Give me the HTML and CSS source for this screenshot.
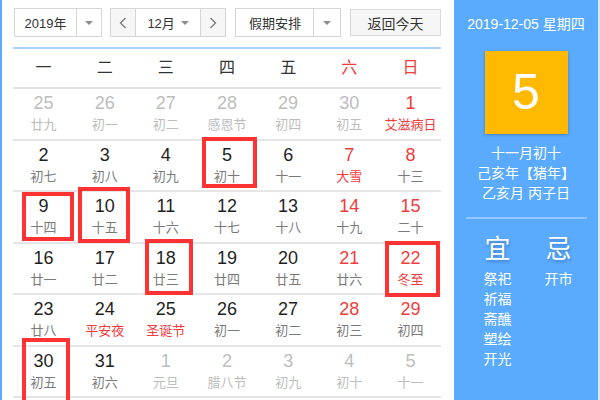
FILE: index.html
```html
<!DOCTYPE html>
<html>
<head>
<meta charset="utf-8">
<title>万年历</title>
<link rel="stylesheet" href="styles.css">
</head>
<body>
<div class="widget">
  <div class="main">
    <div class="toolbar">
      <div class="select year"><span class="sel-text">2019年</span><span class="sel-arrow"><i class="caret"></i></span></div>
      <div class="month-group">
        <span class="nav prev"><svg width="8" height="12" viewBox="0 0 8 12"><polyline points="6.5,1 1.5,6 6.5,11" fill="none" stroke="#777" stroke-width="1.2"/></svg></span>
        <span class="month"><span class="month-text">12月</span><i class="caret"></i></span>
        <span class="nav next"><svg width="8" height="12" viewBox="0 0 8 12"><polyline points="1.5,1 6.5,6 1.5,11" fill="none" stroke="#777" stroke-width="1.2"/></svg></span>
      </div>
      <div class="select holiday"><span class="sel-text">假期安排</span><span class="sel-arrow"><i class="caret"></i></span></div>
      <button class="today">返回今天</button>
    </div>
    <div class="weekdays">
      <span>一</span><span>二</span><span>三</span><span>四</span><span>五</span><span class="red">六</span><span class="red">日</span>
    </div>
    <div class="row">
      <div class="cell other"><span class="num">25</span><span class="lunar">廿九</span></div>
      <div class="cell other"><span class="num">26</span><span class="lunar">初一</span></div>
      <div class="cell other"><span class="num">27</span><span class="lunar">初二</span></div>
      <div class="cell other"><span class="num">28</span><span class="lunar">感恩节</span></div>
      <div class="cell other"><span class="num">29</span><span class="lunar">初四</span></div>
      <div class="cell other"><span class="num">30</span><span class="lunar">初五</span></div>
      <div class="cell weekend"><span class="num">1</span><span class="lunar fest">艾滋病日</span></div>
    </div>
    <div class="row">
      <div class="cell"><span class="num">2</span><span class="lunar">初七</span></div>
      <div class="cell"><span class="num">3</span><span class="lunar">初八</span></div>
      <div class="cell"><span class="num">4</span><span class="lunar">初九</span></div>
      <div class="cell"><span class="num">5</span><span class="lunar">初十</span></div>
      <div class="cell"><span class="num">6</span><span class="lunar">十一</span></div>
      <div class="cell weekend"><span class="num">7</span><span class="lunar fest">大雪</span></div>
      <div class="cell weekend"><span class="num">8</span><span class="lunar">十三</span></div>
    </div>
    <div class="row">
      <div class="cell"><span class="num">9</span><span class="lunar">十四</span></div>
      <div class="cell"><span class="num">10</span><span class="lunar">十五</span></div>
      <div class="cell"><span class="num">11</span><span class="lunar">十六</span></div>
      <div class="cell"><span class="num">12</span><span class="lunar">十七</span></div>
      <div class="cell"><span class="num">13</span><span class="lunar">十八</span></div>
      <div class="cell weekend"><span class="num">14</span><span class="lunar">十九</span></div>
      <div class="cell weekend"><span class="num">15</span><span class="lunar">二十</span></div>
    </div>
    <div class="row">
      <div class="cell"><span class="num">16</span><span class="lunar">廿一</span></div>
      <div class="cell"><span class="num">17</span><span class="lunar">廿二</span></div>
      <div class="cell"><span class="num">18</span><span class="lunar">廿三</span></div>
      <div class="cell"><span class="num">19</span><span class="lunar">廿四</span></div>
      <div class="cell"><span class="num">20</span><span class="lunar">廿五</span></div>
      <div class="cell weekend"><span class="num">21</span><span class="lunar">廿六</span></div>
      <div class="cell weekend"><span class="num">22</span><span class="lunar fest">冬至</span></div>
    </div>
    <div class="row">
      <div class="cell"><span class="num">23</span><span class="lunar">廿八</span></div>
      <div class="cell"><span class="num">24</span><span class="lunar fest">平安夜</span></div>
      <div class="cell"><span class="num">25</span><span class="lunar fest">圣诞节</span></div>
      <div class="cell"><span class="num">26</span><span class="lunar">初一</span></div>
      <div class="cell"><span class="num">27</span><span class="lunar">初二</span></div>
      <div class="cell weekend"><span class="num">28</span><span class="lunar">初三</span></div>
      <div class="cell weekend"><span class="num">29</span><span class="lunar">初四</span></div>
    </div>
    <div class="row">
      <div class="cell"><span class="num">30</span><span class="lunar">初五</span></div>
      <div class="cell"><span class="num">31</span><span class="lunar">初六</span></div>
      <div class="cell other"><span class="num">1</span><span class="lunar">元旦</span></div>
      <div class="cell other"><span class="num">2</span><span class="lunar">腊八节</span></div>
      <div class="cell other"><span class="num">3</span><span class="lunar">初九</span></div>
      <div class="cell other"><span class="num">4</span><span class="lunar">初十</span></div>
      <div class="cell other"><span class="num">5</span><span class="lunar">十一</span></div>
    </div>
  </div>
  <div class="side">
    <div class="side-date">2019-12-05 星期四</div>
    <div class="big-day">5</div>
    <div class="lunar-info">
      <div>十一月初十</div>
      <div>己亥年【猪年】</div>
      <div>乙亥月 丙子日</div>
    </div>
    <div class="sep"></div>
    <div class="yiji">
      <div class="yj-col">
        <div class="yj-title">宜</div>
        <div class="yj-item">祭祀</div>
        <div class="yj-item">祈福</div>
        <div class="yj-item">斋醮</div>
        <div class="yj-item">塑绘</div>
        <div class="yj-item">开光</div>
      </div>
      <div class="yj-col">
        <div class="yj-title">忌</div>
        <div class="yj-item">开市</div>
      </div>
    </div>
  </div>
  <div class="mark m5"></div>
  <div class="mark m9"></div>
  <div class="mark m10"></div>
  <div class="mark m18"></div>
  <div class="mark m22"></div>
  <div class="mark m30"></div>
</div>
</body>
</html>
```

FILE: styles.css
```css
html, body {
  margin: 0;
  padding: 0;
  background: #fff;
}

body {
  font-family: "Liberation Sans", "Noto Sans CJK SC", sans-serif;
  color: #333;
}

.widget {
  position: relative;
  display: flex;
  width: 600px;
  height: 400px;
  overflow: hidden;
  background: #fff;
}

.main {
  width: 454px;
  flex: none;
  box-sizing: border-box;
  border-left: 2px solid #5aabfe;
  padding: 8px 13px 0 11px;
}

/* toolbar */
.toolbar {
  display: flex;
  align-items: flex-start;
  height: 29px;
  margin-bottom: 10px;
  padding-left: 1px;
}

.select {
  display: flex;
  height: 29px;
  box-sizing: border-box;
  border: 1px solid #d6d6d6;
  background: #fff;
}

.sel-text {
  display: flex;
  align-items: center;
  justify-content: center;
  font-size: 13px;
  color: #333;
  border-right: 1px solid #d6d6d6;
}

.sel-arrow {
  flex: 1;
  display: flex;
  align-items: center;
  justify-content: center;
}

.caret {
  display: block;
  width: 0;
  height: 0;
  border-top: 4px solid #8c8c8c;
  border-left: 4px solid transparent;
  border-right: 4px solid transparent;
}

.year {
  width: 88px;
}

.year .sel-text {
  width: 61px;
}

.month-group {
  display: flex;
  margin-left: 8px;
  width: 117px;
  height: 29px;
  box-sizing: border-box;
  border: 1px solid #d6d6d6;
}

.nav {
  width: 24px;
  display: flex;
  align-items: center;
  justify-content: center;
  background: #f6f6f6;
}

.prev {
  border-right: 1px solid #d6d6d6;
}

.next {
  border-left: 1px solid #d6d6d6;
}

.month {
  flex: 1;
  display: flex;
  align-items: center;
  justify-content: center;
  gap: 6px;
  background: #fff;
}

.month-text {
  font-size: 13px;
  color: #333;
}

.holiday {
  margin-left: 9px;
  width: 106px;
}

.holiday .sel-text {
  width: 77px;
}

.today {
  margin-left: 9px;
  margin-top: 1px;
  width: 91px;
  height: 27px;
  padding: 0;
  box-sizing: border-box;
  border: 1px solid #dadada;
  background: #f6f6f6;
  font-family: "Liberation Sans", "Noto Sans CJK SC", sans-serif;
  font-size: 14px;
  color: #333;
}

/* calendar grid */
.weekdays {
  display: grid;
  grid-template-columns: repeat(7, 1fr);
  height: 38px;
  line-height: 38px;
  border-top: 2px solid #a9d4ff;
  border-bottom: 2px solid #e3e3e3;
  font-size: 16px;
  color: #333;
  text-align: center;
}

.weekdays .red {
  color: #f03c3c;
}

.row {
  display: grid;
  grid-template-columns: repeat(7, 1fr);
  height: 49.5px;
  border-bottom: 2px solid #e6e6e6;
}

.cell {
  text-align: center;
  padding-top: 4px;
}

.num {
  display: block;
  font-size: 18px;
  line-height: 20px;
  color: #1f1f1f;
}

.lunar {
  display: block;
  margin-top: 4px;
  font-size: 13px;
  line-height: 16px;
  color: #7a7a7a;
  white-space: nowrap;
}

.weekend .num {
  color: #f03c3c;
}

.lunar.fest {
  color: #f03c3c;
}

.other .num,
.other .lunar {
  color: #bdbdbd;
}

/* side panel */
.side {
  width: 146px;
  flex: none;
  box-sizing: border-box;
  border-right: 2px solid #d4e9ff;
  background: #5aabfe;
  color: #fff;
  display: flex;
  flex-direction: column;
  align-items: center;
  text-align: center;
}

.side-date {
  margin-top: 15px;
  font-size: 14px;
  line-height: 18px;
  white-space: nowrap;
}

.big-day {
  margin-top: 18px;
  width: 83px;
  height: 83px;
  background: #ffb900;
  box-shadow: 0 1px 3px rgba(0, 0, 0, 0.25);
  font-size: 50px;
  line-height: 83px;
  color: #fff;
}

.lunar-info {
  margin-top: 9px;
  font-size: 14px;
  line-height: 20px;
  white-space: nowrap;
}

.sep {
  margin-top: 14px;
  width: 121px;
  height: 2px;
  background: rgba(255, 255, 255, 0.35);
}

.yiji {
  display: flex;
  width: 122px;
  margin-left: 4px;
  margin-top: 15px;
}

.yj-col {
  flex: 1;
  display: flex;
  flex-direction: column;
  align-items: center;
}

.yj-title {
  font-size: 26px;
  line-height: 30px;
  margin-bottom: 5px;
  text-shadow: 1px 2px 3px rgba(0, 40, 100, 0.3);
}

.yj-item {
  font-size: 14px;
  line-height: 20px;
}

/* annotation boxes */
.mark {
  position: absolute;
  box-sizing: border-box;
  border: 4px solid #ff3333;
}

.m5 { left: 202px; top: 137px; width: 55px; height: 51px; }
.m9 { left: 22px; top: 192px; width: 52px; height: 49px; }
.m10 { left: 78px; top: 187px; width: 52px; height: 56px; }
.m18 { left: 145px; top: 239px; width: 48px; height: 56px; }
.m22 { left: 385px; top: 241px; width: 55px; height: 56px; }
.m30 { left: 22px; top: 338px; width: 48px; height: 70px; }
```
